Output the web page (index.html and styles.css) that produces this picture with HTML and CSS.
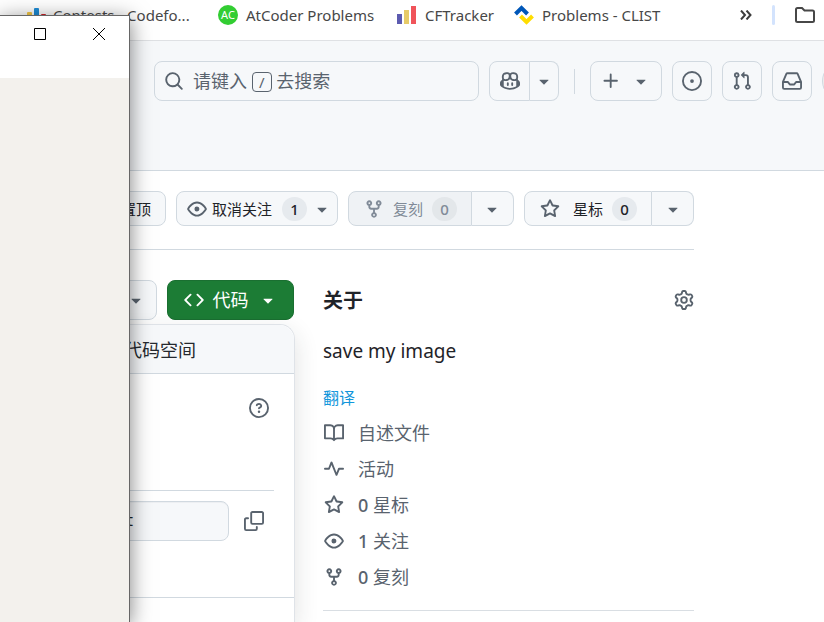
FILE: index.html
```html
<!DOCTYPE html>
<html lang="zh-CN">
<head>
<meta charset="utf-8">
<meta name="viewport" content="width=device-width, initial-scale=1">
<title>save my image</title>
<link rel="stylesheet" href="styles.css">
</head>
<body>
<svg class="sprite" aria-hidden="true">
  <symbol id="search" viewBox="0 0 16 16"><path d="M10.68 11.74a6 6 0 0 1-7.922-8.982 6 6 0 0 1 8.982 7.922l3.04 3.04a.749.749 0 0 1-.326 1.275.749.749 0 0 1-.734-.215ZM11.5 7a4.499 4.499 0 1 0-8.997 0A4.499 4.499 0 0 0 11.5 7Z"/></symbol>
  <symbol id="copilot" viewBox="0 0 16 16"><path d="M7.998 15.035c-4.562 0-7.873-2.914-7.998-3.749V9.338c.085-.628.677-1.686 1.588-2.065.013-.07.024-.143.036-.218.029-.183.06-.384.126-.612-.201-.508-.254-1.084-.254-1.656 0-.87.128-1.769.693-2.484.579-.733 1.494-1.124 2.724-1.261 1.206-.134 2.262.034 2.944.765.05.053.096.108.139.165.044-.057.094-.112.143-.165.682-.731 1.738-.899 2.944-.765 1.23.137 2.145.528 2.724 1.261.566.715.693 1.614.693 2.484 0 .572-.053 1.148-.254 1.656.066.228.098.429.126.612.012.076.024.148.037.218.924.385 1.522 1.471 1.591 2.095v1.872c0 .766-3.351 3.795-8.002 3.795Zm0-1.485c2.28 0 4.584-1.11 5.002-1.433V7.862l-.023-.116c-.49.21-1.075.291-1.727.291-1.146 0-2.059-.327-2.71-.991A3.222 3.222 0 0 1 8 6.303a3.24 3.24 0 0 1-.544.743c-.65.664-1.563.991-2.71.991-.652 0-1.236-.081-1.727-.291l-.023.116v4.255c.419.323 2.722 1.433 5.002 1.433ZM6.762 2.83c-.193-.206-.637-.413-1.682-.297-1.019.113-1.479.404-1.713.7-.247.312-.369.789-.369 1.554 0 .793.129 1.171.308 1.371.162.181.519.379 1.442.379.853 0 1.339-.235 1.638-.54.315-.322.527-.827.617-1.553.117-.935-.037-1.395-.241-1.614Zm4.155-.297c-1.044-.116-1.488.091-1.681.297-.204.219-.359.679-.242 1.614.091.726.303 1.231.618 1.553.299.305.784.54 1.638.54.922 0 1.28-.198 1.442-.379.179-.2.308-.578.308-1.371 0-.765-.123-1.242-.37-1.554-.233-.296-.693-.587-1.713-.7Z"/><path d="M6.25 9.037a.75.75 0 0 1 .75.75v1.501a.75.75 0 0 1-1.5 0V9.787a.75.75 0 0 1 .75-.75Zm4.25.75v1.501a.75.75 0 0 1-1.5 0V9.787a.75.75 0 0 1 1.5 0Z"/></symbol>
  <symbol id="caret" viewBox="0 0 16 16"><path d="m4.427 7.427 3.396 3.396a.25.25 0 0 0 .354 0l3.396-3.396A.25.25 0 0 0 11.396 7H4.604a.25.25 0 0 0-.177.427Z"/></symbol>
  <symbol id="plus" viewBox="0 0 16 16"><path d="M7.75 2a.75.75 0 0 1 .75.75V7h4.25a.75.75 0 0 1 0 1.5H8.5v4.25a.75.75 0 0 1-1.5 0V8.5H2.75a.75.75 0 0 1 0-1.5H7V2.75A.75.75 0 0 1 7.75 2Z"/></symbol>
  <symbol id="issue" viewBox="0 0 16 16"><path d="M8 9.5a1.5 1.5 0 1 0 0-3 1.5 1.5 0 0 0 0 3Z"/><path d="M8 0a8 8 0 1 1 0 16A8 8 0 0 1 8 0ZM1.5 8a6.5 6.5 0 1 0 13 0 6.5 6.5 0 0 0-13 0Z"/></symbol>
  <symbol id="pull" viewBox="0 0 16 16"><path d="M1.5 3.25a2.25 2.25 0 1 1 3 2.122v5.256a2.251 2.251 0 1 1-1.5 0V5.372A2.25 2.25 0 0 1 1.5 3.25Zm5.677-.177L9.573.677A.25.25 0 0 1 10 .854V2.5h1A2.5 2.5 0 0 1 13.5 5v5.628a2.251 2.251 0 1 1-1.5 0V5a1 1 0 0 0-1-1h-1v1.646a.25.25 0 0 1-.427.177L7.177 3.427a.25.25 0 0 1 0-.354ZM3.75 2.5a.75.75 0 1 0 0 1.5.75.75 0 0 0 0-1.5Zm0 9.5a.75.75 0 1 0 0 1.5.75.75 0 0 0 0-1.5Zm8.25.75a.75.75 0 1 0 1.5 0 .75.75 0 0 0-1.5 0Z"/></symbol>
  <symbol id="inbox" viewBox="0 0 16 16"><path d="M2.8 2.06A1.75 1.75 0 0 1 4.41 1h7.18c.7 0 1.333.417 1.61 1.06l2.74 6.395c.04.093.06.194.06.295v4.5A1.75 1.75 0 0 1 14.25 15H1.75A1.75 1.75 0 0 1 0 13.25v-4.5c0-.101.02-.202.06-.295Zm1.61.44a.25.25 0 0 0-.23.152L1.887 8H4.75a.75.75 0 0 1 .6.3L6.625 10h2.75l1.275-1.7a.75.75 0 0 1 .6-.3h2.863L11.82 2.652a.25.25 0 0 0-.23-.152Zm10.09 7h-2.875l-1.275 1.7a.75.75 0 0 1-.6.3h-3.5a.75.75 0 0 1-.6-.3L4.375 9.5H1.5v3.75c0 .138.112.25.25.25h12.5a.25.25 0 0 0 .25-.25Z"/></symbol>
  <symbol id="eye" viewBox="0 0 16 16"><path d="M8 2c1.981 0 3.671.992 4.933 2.078 1.27 1.091 2.187 2.345 2.637 3.023a1.62 1.62 0 0 1 0 1.798c-.45.678-1.367 1.932-2.637 3.023C11.67 13.008 9.981 14 8 14c-1.981 0-3.671-.992-4.933-2.078C1.797 10.83.88 9.576.43 8.898a1.62 1.62 0 0 1 0-1.798c.45-.677 1.367-1.931 2.637-3.022C4.33 2.992 6.019 2 8 2ZM1.679 7.932a.12.12 0 0 0 0 .136c.411.622 1.241 1.75 2.366 2.717C5.176 11.758 6.527 12.5 8 12.5c1.473 0 2.825-.742 3.955-1.715 1.124-.967 1.954-2.096 2.366-2.717a.12.12 0 0 0 0-.136c-.412-.621-1.242-1.75-2.366-2.717C10.824 4.242 9.473 3.5 8 3.5c-1.473 0-2.825.742-3.955 1.715-1.124.967-1.954 2.096-2.366 2.717ZM8 10a2 2 0 1 1-.001-3.999A2 2 0 0 1 8 10Z"/></symbol>
  <symbol id="fork" viewBox="0 0 16 16"><path d="M5 5.372v.878c0 .414.336.75.75.75h4.5a.75.75 0 0 0 .75-.75v-.878a2.25 2.25 0 1 1 1.5 0v.878a2.25 2.25 0 0 1-2.25 2.25h-1.5v2.128a2.251 2.251 0 1 1-1.5 0V8.5h-1.5A2.25 2.25 0 0 1 3.5 6.25v-.878a2.25 2.25 0 1 1 1.5 0ZM5 3.25a.75.75 0 1 0-1.5 0 .75.75 0 0 0 1.5 0Zm6.75.75a.75.75 0 1 0 0-1.5.75.75 0 0 0 0 1.5Zm-3 8.75a.75.75 0 1 0-1.5 0 .75.75 0 0 0 1.5 0Z"/></symbol>
  <symbol id="star" viewBox="0 0 16 16"><path d="M8 .25a.75.75 0 0 1 .673.418l1.882 3.815 4.21.612a.75.75 0 0 1 .416 1.279l-3.046 2.97.719 4.192a.751.751 0 0 1-1.088.791L8 12.347l-3.766 1.98a.75.75 0 0 1-1.088-.79l.72-4.194L.818 6.374a.75.75 0 0 1 .416-1.28l4.21-.611L7.327.668A.75.75 0 0 1 8 .25Zm0 2.445L6.615 5.5a.75.75 0 0 1-.564.41l-3.097.45 2.24 2.184a.75.75 0 0 1 .216.664l-.528 3.084 2.769-1.456a.75.75 0 0 1 .698 0l2.77 1.456-.53-3.084a.75.75 0 0 1 .216-.664l2.24-2.183-3.096-.45a.75.75 0 0 1-.564-.41L8 2.694Z"/></symbol>
  <symbol id="book" viewBox="0 0 16 16"><path d="M0 1.75A.75.75 0 0 1 .75 1h4.253c1.227 0 2.317.59 3 1.501A3.743 3.743 0 0 1 11.006 1h4.245a.75.75 0 0 1 .75.75v10.5a.75.75 0 0 1-.75.75h-4.507a2.25 2.25 0 0 0-1.591.659l-.622.621a.75.75 0 0 1-1.06 0l-.622-.621A2.25 2.25 0 0 0 5.258 13H.75a.75.75 0 0 1-.75-.75Zm7.251 10.324.004-5.073-.002-2.253A2.25 2.25 0 0 0 5.003 2.5H1.5v9h3.757a3.75 3.75 0 0 1 1.994.574ZM8.755 4.75l-.004 7.322a3.752 3.752 0 0 1 1.992-.572H14.5v-9h-3.495a2.25 2.25 0 0 0-2.25 2.25Z"/></symbol>
  <symbol id="pulse" viewBox="0 0 16 16"><path d="M6 2c.306 0 .582.187.696.471L10 10.731l1.304-3.26A.751.751 0 0 1 12 7h3.25a.75.75 0 0 1 0 1.5h-2.742l-1.812 4.528a.751.751 0 0 1-1.392 0L6 4.77 4.696 8.03A.75.75 0 0 1 4 8.5H.75a.75.75 0 0 1 0-1.5h2.742l1.812-4.529A.751.751 0 0 1 6 2Z"/></symbol>
  <symbol id="code" viewBox="0 0 16 16"><path d="m11.28 3.22 4.25 4.25a.75.75 0 0 1 0 1.06l-4.25 4.25a.749.749 0 0 1-1.275-.326.749.749 0 0 1 .215-.734L13.94 8l-3.72-3.72a.749.749 0 0 1 .326-1.275.749.749 0 0 1 .734.215Zm-6.56 0a.751.751 0 0 1 1.042.018.751.751 0 0 1 .018 1.042L2.06 8l3.72 3.72a.749.749 0 0 1-.326 1.275.749.749 0 0 1-.734-.215L.47 8.53a.75.75 0 0 1 0-1.06Z"/></symbol>
  <symbol id="question" viewBox="0 0 16 16"><path d="M0 8a8 8 0 1 1 16 0A8 8 0 0 1 0 8Zm8-6.5a6.5 6.5 0 1 0 0 13 6.5 6.5 0 0 0 0-13ZM6.92 6.085h.001a.749.749 0 1 1-1.342-.67c.169-.339.436-.701.849-.977C6.845 4.16 7.369 4 8 4a2.756 2.756 0 0 1 1.637.525c.503.377.863.965.863 1.725 0 .448-.115.83-.329 1.15-.205.307-.47.513-.692.662-.109.072-.22.138-.313.195l-.006.004a6.24 6.24 0 0 0-.26.16.952.952 0 0 0-.276.245.75.75 0 0 1-1.248-.832c.184-.264.42-.489.692-.661.103-.067.207-.132.313-.195l.007-.004c.1-.061.182-.11.258-.161a.969.969 0 0 0 .277-.245C8.96 6.514 9 6.427 9 6.25a.612.612 0 0 0-.262-.525A1.27 1.27 0 0 0 8 5.5c-.369 0-.595.09-.74.187a1.01 1.01 0 0 0-.34.398ZM9 11a1 1 0 1 1-2 0 1 1 0 0 1 2 0Z"/></symbol>
  <symbol id="copy" viewBox="0 0 16 16"><path d="M0 6.75C0 5.784.784 5 1.75 5h1.5a.75.75 0 0 1 0 1.5h-1.5a.25.25 0 0 0-.25.25v7.5c0 .138.112.25.25.25h7.5a.25.25 0 0 0 .25-.25v-1.5a.75.75 0 0 1 1.5 0v1.5A1.75 1.75 0 0 1 9.25 16h-7.5A1.75 1.75 0 0 1 0 14.25Z"/><path d="M5 1.75C5 .784 5.784 0 6.75 0h7.5C15.216 0 16 .784 16 1.75v7.5A1.75 1.75 0 0 1 14.25 11h-7.5A1.75 1.75 0 0 1 5 9.25Zm1.75-.25a.25.25 0 0 0-.25.25v7.5c0 .138.112.25.25.25h7.5a.25.25 0 0 0 .25-.25v-7.5a.25.25 0 0 0-.25-.25Z"/></symbol>
  <symbol id="gear" viewBox="0 0 16 16"><path d="M8 0a8.2 8.2 0 0 1 .701.031C9.444.095 9.99.645 10.16 1.29l.288 1.107c.018.066.079.158.212.224.231.114.454.243.668.386.123.082.233.09.299.071l1.103-.303c.644-.176 1.392.021 1.82.63.27.385.506.792.704 1.218.315.675.111 1.422-.364 1.891l-.814.806c-.049.048-.098.147-.088.294.016.257.016.515 0 .772-.01.147.038.246.088.294l.814.806c.475.469.679 1.216.364 1.891a7.977 7.977 0 0 1-.704 1.217c-.428.61-1.176.807-1.82.63l-1.102-.302c-.067-.019-.177-.011-.3.071a5.909 5.909 0 0 1-.668.386c-.133.066-.194.158-.211.224l-.29 1.106c-.168.646-.715 1.196-1.458 1.26a8.006 8.006 0 0 1-1.402 0c-.743-.064-1.289-.614-1.458-1.26l-.289-1.106c-.018-.066-.079-.158-.212-.224a5.738 5.738 0 0 1-.668-.386c-.123-.082-.233-.09-.299-.071l-1.103.303c-.644.176-1.392-.021-1.82-.63a8.12 8.12 0 0 1-.704-1.218c-.315-.675-.111-1.422.363-1.891l.815-.806c.05-.048.098-.147.088-.294a6.214 6.214 0 0 1 0-.772c.01-.147-.038-.246-.088-.294l-.815-.806C.635 6.045.431 5.298.746 4.623a7.92 7.92 0 0 1 .704-1.217c.428-.61 1.176-.807 1.82-.63l1.102.302c.067.019.177.011.3-.071.214-.143.437-.272.668-.386.133-.066.194-.158.211-.224l.29-1.106C6.009.645 6.556.095 7.299.03 7.53.01 7.764 0 8 0Zm-.571 1.525c-.036.003-.108.036-.137.146l-.289 1.105c-.147.561-.549.967-.998 1.189-.173.086-.34.183-.5.29-.417.278-.97.423-1.529.27l-1.103-.303c-.109-.03-.175.016-.195.045-.22.312-.412.644-.573.99-.014.031-.021.11.059.19l.815.806c.411.406.562.957.53 1.456a4.709 4.709 0 0 0 0 .582c.032.499-.119 1.05-.53 1.456l-.815.806c-.081.08-.073.159-.059.19.162.346.353.677.573.989.02.03.085.076.195.046l1.102-.303c.56-.153 1.113-.008 1.53.27.161.107.328.204.501.29.447.222.85.629.997 1.189l.289 1.105c.029.109.101.143.137.146a6.6 6.6 0 0 0 1.142 0c.036-.003.108-.036.137-.146l.289-1.105c.147-.561.549-.967.998-1.189.173-.086.34-.183.5-.29.417-.278.97-.423 1.529-.27l1.103.303c.109.029.175-.016.195-.045.22-.313.411-.644.573-.99.014-.031.021-.11-.059-.19l-.815-.806c-.411-.406-.562-.957-.53-1.456a4.709 4.709 0 0 0 0-.582c-.032-.499.119-1.05.53-1.456l.815-.806c.081-.08.073-.159.059-.19a6.464 6.464 0 0 0-.573-.989c-.02-.03-.085-.076-.195-.046l-1.102.303c-.56.153-1.113.008-1.53-.27a4.44 4.44 0 0 0-.501-.29c-.447-.222-.85-.629-.997-1.189l-.289-1.105c-.029-.11-.101-.143-.137-.146a6.6 6.6 0 0 0-1.142 0ZM11 8a3 3 0 1 1-6 0 3 3 0 0 1 6 0ZM9.5 8a1.5 1.5 0 1 0-3.001.001A1.5 1.5 0 0 0 9.5 8Z"/></symbol>
</svg>

<nav class="bookmarks" aria-label="书签">
  <a class="bookmark" href="#"><svg viewBox="0 0 20 20"><rect x="0" y="7" width="5" height="11" rx="1" fill="#f6c944"/><rect x="7" y="3" width="5" height="15" rx="1" fill="#1f8dd6"/><rect x="14" y="9" width="5" height="9" rx="1" fill="#d3222a"/></svg>Contests - Codefo...</a>
  <a class="bookmark" href="#"><span class="ac-logo">AC</span>AtCoder Problems</a>
  <a class="bookmark" href="#"><svg viewBox="0 0 20 20"><rect x="0" y="9" width="5" height="10" fill="#5c5bb0"/><rect x="7" y="5" width="5" height="14" fill="#e7cb68"/><rect x="14" y="1" width="5" height="18" fill="#f0545a"/></svg>CFTracker</a>
  <a class="bookmark" href="#"><svg viewBox="0 0 20 20" fill="none" stroke-width="4"><path d="M1.500 9 7.500 3l6 6" stroke="#0057b8"/><path d="m6.500 11 6 6 6-6" stroke="#ffdd00"/></svg>Problems - CLIST</a>
  <span class="bookmark-end">
    <button class="plain" aria-label="更多书签"><svg class="chevrons" viewBox="0 0 12 10" fill="none" stroke="#3c3c3c" stroke-width="2"><path d="m1 0.500 4 4.500-4 4.500M6.500 0.500l4 4.500-4 4.500"/></svg></button>
    <span class="bar"></span>
    <button class="plain" aria-label="所有书签"><svg viewBox="0 0 20 20" fill="none" stroke="#474747" stroke-width="2"><path d="M1 15.500v-11q0-1.500 1.500-1.500h4.500l2.500 2.500h8q1.500 0 1.500 1.500v8.500q0 1.500-1.500 1.500h-15q-1.500 0-1.500-1.500Z"/></svg></button>
  </span>
</nav>

<header class="site-header">
  <button class="box search"><svg><use href="#search"/></svg><span>请键入 <kbd>/</kbd> 去搜索</span></button>
  <div class="group tools">
    <button class="box icon-btn" aria-label="Copilot"><svg><use href="#copilot"/></svg></button>
    <button class="box narrow" aria-label="Copilot 菜单"><svg><use href="#caret"/></svg></button>
  </div>
  <span class="divider"></span>
  <button class="box create" aria-label="新建"><svg><use href="#plus"/></svg><svg><use href="#caret"/></svg></button>
  <button class="box icon-btn" aria-label="议题"><svg><use href="#issue"/></svg></button>
  <button class="box icon-btn" aria-label="拉取请求"><svg><use href="#pull"/></svg></button>
  <button class="box icon-btn" aria-label="通知"><svg><use href="#inbox"/></svg></button>
  <button class="avatar" aria-label="用户"></button>
</header>

<main>
  <div class="actions">
    <button class="box">置顶</button>
    <button class="box watch"><svg><use href="#eye"/></svg>取消关注<span class="count">1</span><svg><use href="#caret"/></svg></button>
    <div class="group">
      <button class="box labelled" disabled><svg><use href="#fork"/></svg>复刻<span class="count">0</span></button>
      <button class="box more" aria-label="复刻菜单"><svg><use href="#caret"/></svg></button>
    </div>
    <div class="group">
      <button class="box labelled star"><svg><use href="#star"/></svg>星标<span class="count">0</span></button>
      <button class="box more" aria-label="星标菜单"><svg><use href="#caret"/></svg></button>
    </div>
  </div>

  <div class="columns">
    <section class="files">
      <button class="box branch" aria-label="添加文件"><svg><use href="#caret"/></svg></button>
      <div class="code-wrap">
        <button class="box primary"><svg><use href="#code"/></svg>代码<svg><use href="#caret"/></svg></button>
        <div class="menu">
          <div class="menu-head"><button class="plain tab">代码空间</button></div>
          <div class="clone">
            <button class="plain help" aria-label="帮助"><svg><use href="#question"/></svg></button>
            <div class="clone-url">
              <input type="text" value="t" aria-label="克隆地址" readonly>
              <button class="plain" aria-label="复制"><svg><use href="#copy"/></svg></button>
            </div>
          </div>
        </div>
      </div>
    </section>

    <aside class="about">
      <div class="about-head"><h2>关于</h2><button class="plain" aria-label="设置"><svg><use href="#gear"/></svg></button></div>
      <p>save my image</p>
      <a class="translate" href="#">翻译</a>
      <ul>
        <li><a href="#"><svg><use href="#book"/></svg>自述文件</a></li>
        <li><a href="#"><svg><use href="#pulse"/></svg>活动</a></li>
        <li><a href="#"><svg><use href="#star"/></svg><span><b>0</b> 星标</span></a></li>
        <li><a href="#"><svg><use href="#eye"/></svg><span><b>1</b> 关注</span></a></li>
        <li><a href="#"><svg><use href="#fork"/></svg><span><b>0</b> 复刻</span></a></li>
      </ul>
    </aside>
  </div>
</main>

<div class="window">
  <div class="titlebar">
    <button class="plain" aria-label="最大化"><svg viewBox="0 0 12 12"><path d="M.5.5h11v11H.5Z"/></svg></button>
    <button class="plain" aria-label="关闭"><svg viewBox="0 0 12 12"><path d="m0 0 12 12M12 0 0 12"/></svg></button>
  </div>
</div>
</body>
</html>
```

FILE: styles.css
```css
* { box-sizing: border-box; }

body {
  position: relative;
  min-height: 100vh;
  margin: 0;
  overflow: hidden;
  background: #fff;
  color: #1f2328;
  font: 18px/24px "Noto Sans", "Noto Sans CJK SC", sans-serif;
}

.sprite { display: none; }
svg { flex: none; width: 20px; height: 20px; fill: currentColor; }
a { color: inherit; text-decoration: none; }
button, input { margin: 0; font: inherit; color: inherit; }

.plain {
  display: flex;
  align-items: center;
  padding: 0;
  border: 0;
  background: none;
  color: #59636e;
}

/* Bookmarks bar */
.bookmarks {
  display: grid;
  grid-template-columns: 191px 179px 117px 1fr auto;
  align-items: center;
  height: 41px;
  padding: 0 9px 10px 27px;
  border-bottom: 1px solid #dfe1e4;
  color: #474747;
  font-size: 15px;
}
.bookmark { display: flex; align-items: center; gap: 8px; white-space: nowrap; }
.bookmark svg { fill: none; }
.bookmark:first-child { gap: 6px; }
.ac-logo {
  width: 20px;
  height: 20px;
  border-radius: 50%;
  background: #32cd32;
  color: #fff;
  font-size: 11px;
  line-height: 20px;
  text-align: center;
}
.bookmark-end { display: flex; align-items: center; gap: 20px; }
.bookmark-end svg { fill: none; }
.bookmark-end .chevrons { width: 12px; height: 10px; }
.bar { width: 3px; height: 20px; border-radius: 2px; background: #d3e3fd; }

/* Shared button */
.box {
  display: flex;
  align-items: center;
  justify-content: center;
  height: 40px;
  padding: 0 14px;
  border: 1px solid #d1d9e0;
  border-radius: 8px;
  background: #f6f8fa;
  white-space: nowrap;
}
.box svg { color: #59636e; }
.group { display: flex; }
.group .box:first-child { border-radius: 8px 0 0 8px; }
.group .box:last-child { border-left: 0; border-radius: 0 8px 8px 0; }

/* Site header */
.site-header {
  display: flex;
  gap: 10px;
  height: 130px;
  padding: 20px 0 0 154px;
  border-bottom: 1px solid #d1d9e0;
  background: #f6f8fa;
}
.search {
  flex: 1;
  justify-content: flex-start;
  gap: 9px;
  padding: 0 9px;
  color: #59636e;
}
kbd {
  display: inline-block;
  width: 20px;
  height: 20px;
  border: 1px solid #59636e;
  border-radius: 4px;
  font: 15px/18px "Noto Sans", sans-serif;
  text-align: center;
}
.icon-btn { width: 40px; padding: 0; }
.group .icon-btn { width: 41px; }
.narrow { width: 29px; padding: 0; }
.divider { width: 1px; height: 25px; margin: 8px 5px; background: #d1d9e0; }
.create { gap: 10px; width: 72px; padding: 0; }
.avatar {
  flex: none;
  width: 40px;
  height: 40px;
  margin-right: -38px;
  border: 1px solid #d1d9e0;
  border-radius: 50%;
  background: #eee;
}

/* Repository actions */
main { padding: 20px 130px 0 0; }
.actions {
  display: flex;
  justify-content: flex-end;
  gap: 10px;
  padding-bottom: 23px;
  border-bottom: 1px solid #d1d9e0;
  font-size: 15px;
}
.actions .box { height: 35px; }
.actions .watch { gap: 5px; padding: 0 5px 0 10px; }
.actions .watch .count { margin: 0 0 0 5px; }
.actions .labelled { gap: 9px; padding: 0 14px 0 15px; }
.actions .star svg { margin-right: 4px; }
.actions .more { width: 42px; padding: 0; }
.count {
  min-width: 25px;
  padding: 0 8px;
  border-radius: 24px;
  background: #e6eaee;
  font-size: 15px;
  font-weight: 500;
}
.box:disabled { background: #eff2f5; color: #818b98; }
.box:disabled svg { color: #818b98; }
.box:disabled .count { background: #e3e7ea; }

/* Content columns */
.columns { display: flex; gap: 29px; padding-top: 30px; }
.files { display: flex; flex: 1; justify-content: flex-end; gap: 10px; }
.branch { padding: 0 10px; }
.code-wrap { position: relative; }
.primary { gap: 9px; width: 127px; padding: 0; border-color: #1a6f31; background: #1c7c35; color: #fff; }
.primary svg { color: #fff; }

.menu {
  position: absolute;
  top: 44px;
  right: -1px;
  width: 400px;
  border: 1px solid #dfe3e8;
  border-bottom: 0;
  border-radius: 15px 15px 0 0;
  background: #fff;
  box-shadow: 0 8px 24px rgba(37, 41, 46, 0.14);
}
.menu-head {
  display: flex;
  justify-content: flex-end;
  height: 49px;
  padding: 2px 98px 0 0;
  border-bottom: 1px solid #d1d9e0;
  border-radius: 15px 15px 0 0;
  background: #f6f8fa;
}
.tab { color: #25292e; }
.clone { height: 224px; padding: 24px 20px 0; border-bottom: 1px solid #d1d9e0; }
.help { margin: 0 5px 72px auto; }
.clone-url {
  display: flex;
  gap: 15px;
  padding: 10px 10px 0 0;
  border-top: 1px solid #d1d9e0;
}
.clone-url input {
  flex: 1;
  min-width: 0;
  height: 40px;
  padding: 0 94px 0 15px;
  border: 1px solid #d1d9e0;
  border-radius: 8px;
  background: #f6f8fa;
  box-shadow: inset 0 1px 0 rgba(31, 35, 40, 0.04);
  font: 15px "DejaVu Sans Mono", monospace;
  text-align: right;
}
.menu::after { display: block; height: 24px; content: ""; }

/* About */
.about { width: 371px; border-bottom: 1px solid #d9dee3; }
.about-head { display: flex; justify-content: space-between; height: 40px; }
h2 { margin: 0; font-size: 20px; line-height: 42px; font-weight: 700; }
.about p { margin: 19px 0 21px; font-size: 19px; }
.translate { display: block; height: 30px; color: #1296db; font-size: 16px; line-height: 28px; }
ul { margin: 0 0 15px; padding: 1px 0 0 1px; list-style: none; color: #59636e; }
li a { display: flex; align-items: center; gap: 14px; height: 36px; }
b { font-weight: 500; }

/* Foreground window */
.window {
  position: absolute;
  top: 15px;
  bottom: 0;
  left: 0;
  width: 130px;
  border: solid #666;
  border-width: 1px 1px 0 0;
  background: #f3f1ed;
  box-shadow: 0 4px 20px rgba(0, 0, 0, 0.5);
}
.titlebar {
  display: flex;
  justify-content: flex-end;
  gap: 47px;
  height: 62px;
  padding: 12px 24px 0 0;
  background: #fff;
}
.titlebar .plain { height: 12px; }
.titlebar svg { width: 12px; height: 12px; fill: none; stroke: #000; }
```
